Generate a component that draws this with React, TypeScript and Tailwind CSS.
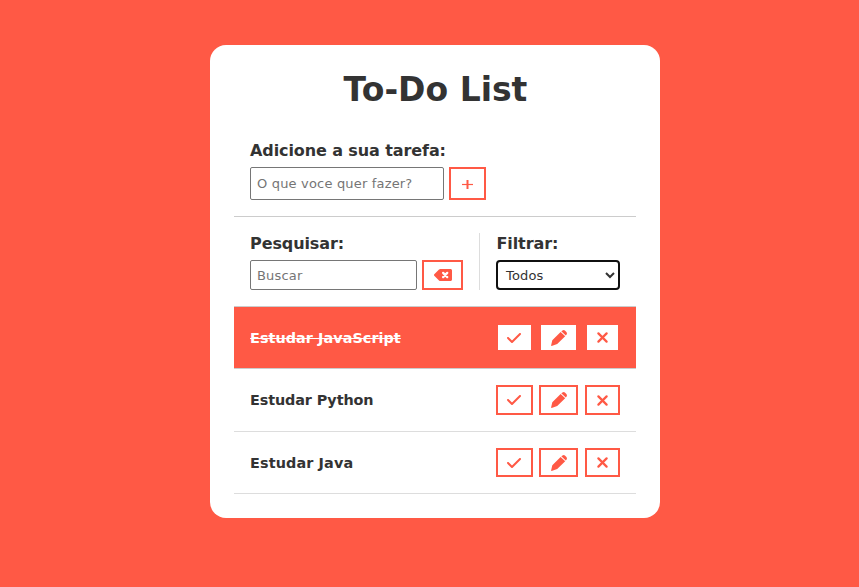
import { FaCheck } from "react-icons/fa6";

type Task = { title: string; done: boolean; row: string; button: string; text: string };

const tasks: Task[] = [
  { title: "Estudar JavaScript", done: true, row: "h-[62px] border-[#ccc] bg-[#ff5945] text-white", button: "h-[29px]", text: "tracking-[0.05px]" },
  { title: "Estudar Python", done: false, row: "h-[63px] border-[#ddd]", button: "h-[30px]", text: "tracking-[-0.12px]" },
  { title: "Estudar Java", done: false, row: "h-[62px] border-[#ddd]", button: "h-[29px]", text: "tracking-[0.12px]" },
];

const btn = "flex items-center justify-center border-2 border-[#ff5945] bg-white text-[#ff5945]";

function PenIcon() {
  return (
    <svg className="size-4" viewBox="0 0 16 16" fill="currentColor">
      <path d="M10.3 1.3 11.5.5Q12.8-.4 13.9.6L15.4 2.1Q16.4 3.2 15.6 4.5L14.8 5.6ZM9.6 1.9 14.2 6.3 6.2 14 .6 16Q0 16 .1 15.4L1.3 10.2Z" />
    </svg>
  );
}

function DeleteIcon() {
  return (
    <svg className="h-4 w-[18px]" viewBox="0 0 576 512">
      <path
        fill="currentColor"
        d="M576 112V400C576 427 555 448 528 448H205C188 448 172 441 160 429L9 279C3 273 0 264 0 256S3 239 9 233L160 83C172 71 188 64 205 64H528C555 64 576 85 576 112Z"
      />
      <path stroke="#fff" strokeWidth="72" strokeLinecap="round" d="M292 188 424 324M424 188 292 324" />
    </svg>
  );
}

function TaskRow({ task }: { task: Task }) {
  return (
    <li className={`flex items-center justify-between border-b px-4 ${task.row}`}>
      <h3 className={`text-[14.4px] leading-5 font-bold ${task.text} ${task.done ? "line-through" : ""}`}>
        {task.title}
      </h3>
      <div className="flex">
        <button className={`${btn} ${task.button} mr-1.5 w-[37px] pr-px`}>
          <FaCheck className="h-4 w-[14px]" />
        </button>
        <button className={`${btn} ${task.button} mr-[7px] w-[39px]`}>
          <PenIcon />
        </button>
        <button className={`${btn} ${task.button} w-[35px]`}>
          <svg className="size-[11px]" viewBox="0 0 11 11" stroke="currentColor" strokeWidth="2.2" strokeLinecap="round">
            <path d="M1.4 1.4 9.6 9.6M9.6 1.4 1.4 9.6" />
          </svg>
        </button>
      </div>
    </li>
  );
}

export default function App() {
  return (
    <div className="h-[587px] w-full bg-[#ff5945] pt-[45px] pl-[210px] font-['DejaVu_Sans',sans-serif] text-[#333]">
      <main className="h-[473px] w-[450px] rounded-[16px] bg-white px-6 pt-6">
        <h1 className="h-[70px] pl-px text-center text-[33px] leading-[42px] font-bold">To-Do List</h1>
        <form className="h-[78px] border-b border-[#ccc] px-4">
          <label className="block h-[28px] pt-0.5 text-base leading-5 font-bold tracking-[-0.1px]">
            Adicione a sua tarefa:
          </label>
          <div className="flex gap-[5px]">
            <input
              className="h-[33px] w-[194px] rounded-[2px] border border-[#767676] px-1.5 text-[13px] tracking-[0.18px] placeholder:text-[#757575]"
              placeholder="O que voce quer fazer?"
            />
            <button type="button" className={`${btn} h-[33px] w-[37px] pt-px`}>
              <svg width="11" height="10" viewBox="0 0 11 10" fill="none" stroke="currentColor">
                <path d="M0 5.5H11" strokeWidth="1.2" />
                <path d="M5.5 1V10" strokeWidth="2" />
              </svg>
            </button>
          </div>
        </form>
        <section className="flex h-[90px] border-b border-[#ccc] px-4 pt-4">
          <div className="h-[57px] w-[230px] border-r border-[#ddd]">
            <h2 className="h-[27px] pt-px text-base leading-5 font-bold tracking-[-0.1px]">Pesquisar:</h2>
            <div className="flex gap-[5px]">
              <input
                className="h-[30px] w-[167px] rounded-[2px] border border-[#767676] px-1.5 text-[13px] tracking-[0.18px] placeholder:text-[#757575]"
                placeholder="Buscar"
              />
              <button className={`${btn} h-[30px] w-[41px]`}>
                <DeleteIcon />
              </button>
            </div>
          </div>
          <div className="ml-4">
            <h2 className="h-[27px] pt-px pl-[0.5px] text-base leading-5 font-bold tracking-[-0.1px]">Filtrar:</h2>
            <button className="flex h-[30px] w-[124px] items-center justify-between rounded-[4px] border-2 border-[#101010] pr-[3px] pl-2 text-[13px] tracking-[0.18px]">
              <span className="pt-px">Todos</span>
              <svg width="10" height="8" viewBox="0 0 10 8" fill="none" stroke="currentColor" strokeWidth="2">
                <path d="M1 2 5 6 9 2" />
              </svg>
            </button>
          </div>
        </section>
        <ul>
          {tasks.map((task) => (
            <TaskRow key={task.title} task={task} />
          ))}
        </ul>
      </main>
    </div>
  );
}
